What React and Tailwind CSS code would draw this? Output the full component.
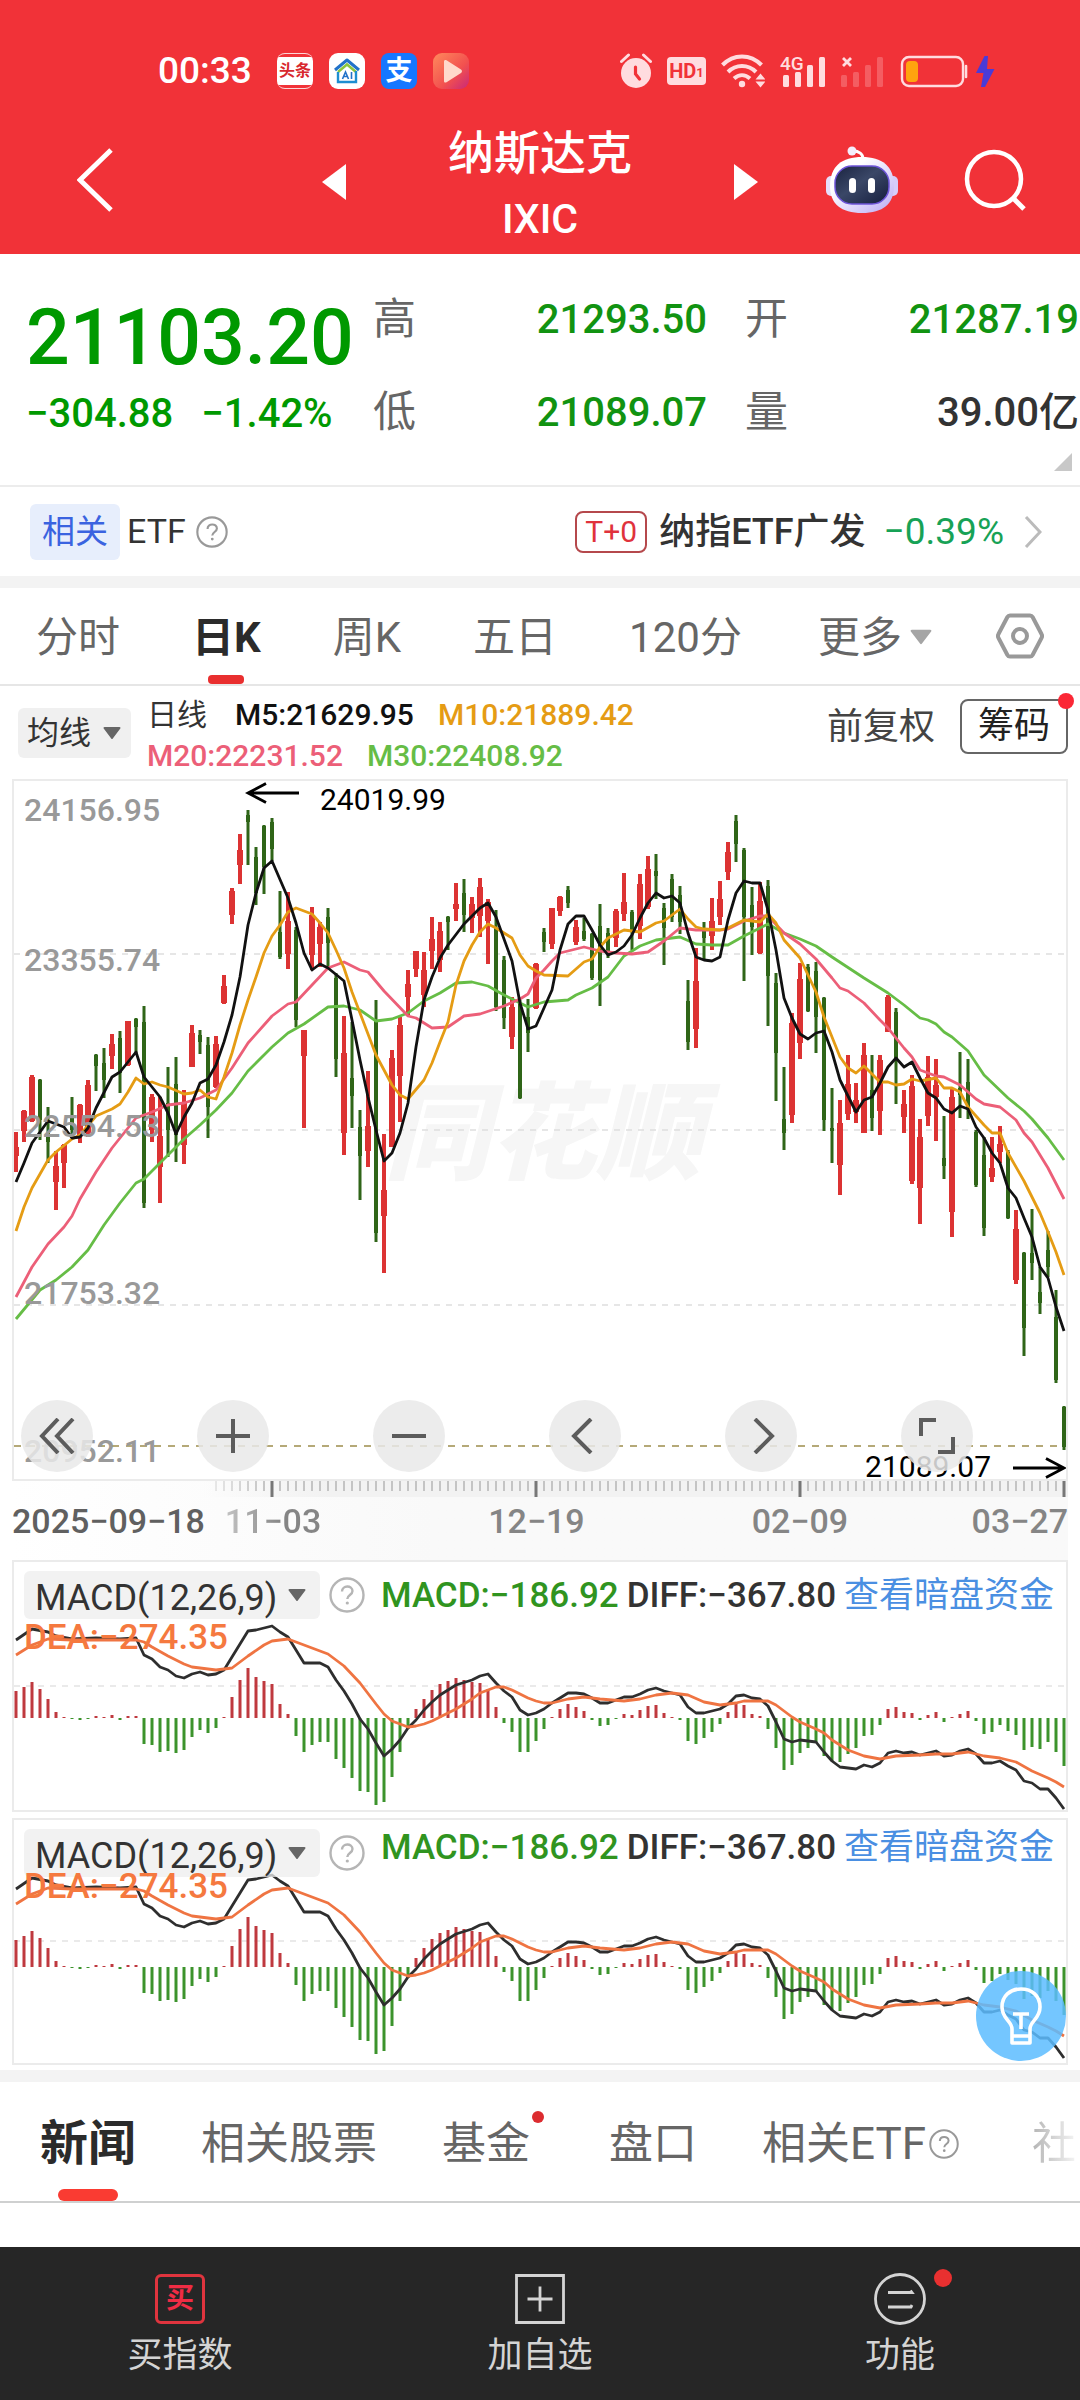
import React, { useState } from "react";

const FONT = "font-['Roboto','Noto_Sans_CJK_SC',sans-serif]";

// [color, high, body top, body bottom, low]
const candles = [
	["r", 352, 367, 376, 392], ["r", 330, 331, 351, 362], ["r", 295, 297, 341, 342], ["g", 299, 300, 340, 360],
	["g", 327, 353, 362, 383], ["r", 371, 386, 402, 430], ["r", 364, 365, 383, 408], ["g", 317, 337, 350, 358],
	["r", 324, 325, 355, 363], ["r", 300, 305, 353, 357], ["g", 274, 275, 286, 311], ["g", 268, 283, 300, 318],
	["r", 254, 264, 276, 289], ["g", 251, 258, 293, 313], ["r", 241, 241, 285, 286], ["g", 238, 239, 247, 273],
	["g", 226, 242, 423, 428], ["r", 314, 317, 350, 362], ["r", 317, 356, 387, 423], ["g", 287, 323, 350, 377],
	["g", 277, 304, 355, 382], ["r", 310, 323, 365, 384], ["r", 245, 253, 287, 287], ["g", 250, 255, 262, 274],
	["g", 257, 265, 327, 358], ["r", 256, 264, 307, 308], ["r", 195, 206, 223, 224], ["r", 108, 111, 135, 144],
	["r", 54, 70, 85, 104], ["g", 30, 35, 42, 85], ["g", 67, 77, 113, 125], ["g", 45, 46, 87, 114],
	["g", 38, 42, 69, 81], ["g", 111, 152, 177, 179], ["r", 112, 141, 174, 189], ["g", 147, 150, 240, 247],
	["r", 250, 250, 276, 348], ["r", 127, 135, 175, 190], ["r", 142, 147, 164, 187], ["g", 128, 137, 163, 187],
	["g", 193, 198, 279, 297], ["r", 236, 273, 353, 375], ["g", 242, 298, 316, 348], ["g", 330, 347, 376, 420],
	["r", 291, 346, 371, 387], ["g", 220, 240, 453, 462], ["r", 354, 410, 436, 493], ["r", 270, 278, 367, 367],
	["r", 237, 245, 296, 342], ["r", 190, 204, 217, 235], ["r", 171, 171, 189, 197], ["r", 172, 190, 215, 227],
	["r", 137, 159, 171, 189], ["r", 142, 151, 180, 192], ["g", 136, 137, 142, 170], ["r", 103, 124, 129, 141],
	["g", 99, 113, 135, 152], ["r", 117, 124, 138, 153], ["r", 98, 107, 136, 157], ["r", 119, 122, 141, 184],
	["g", 130, 148, 227, 231], ["g", 176, 180, 238, 249], ["r", 217, 227, 257, 269], ["g", 220, 223, 318, 319],
	["g", 219, 237, 253, 272], ["r", 183, 184, 228, 229], ["g", 148, 152, 162, 172], ["r", 128, 128, 164, 169],
	["r", 116, 117, 131, 136], ["g", 106, 110, 123, 128], ["r", 140, 147, 162, 165], ["g", 138, 151, 159, 161],
	["g", 153, 154, 198, 200], ["g", 124, 146, 200, 226], ["g", 148, 153, 173, 178], ["r", 129, 131, 158, 167],
	["r", 93, 122, 134, 141], ["g", 130, 132, 152, 170], ["r", 94, 104, 146, 159], ["r", 76, 89, 127, 129],
	["g", 74, 91, 96, 119], ["g", 123, 128, 148, 185], ["g", 94, 99, 137, 142], ["g", 106, 115, 142, 154],
	["g", 200, 221, 262, 270], ["r", 168, 201, 249, 268], ["g", 142, 151, 158, 180], ["r", 118, 141, 156, 170],
	["r", 101, 119, 137, 145], ["r", 62, 72, 92, 100], ["g", 35, 41, 64, 82], ["g", 68, 70, 137, 201],
	["g", 107, 125, 147, 175], ["r", 102, 121, 173, 174], ["g", 100, 106, 196, 246], ["g", 193, 203, 273, 321],
	["g", 287, 339, 353, 370], ["r", 233, 243, 335, 343], ["r", 183, 199, 263, 279], ["g", 184, 187, 231, 232],
	["g", 182, 191, 237, 273], ["g", 217, 218, 340, 351], ["g", 308, 348, 351, 383], ["r", 320, 343, 385, 415],
	["r", 275, 304, 334, 340], ["r", 303, 320, 332, 343], ["r", 263, 275, 353, 353], ["g", 275, 310, 338, 351],
	["r", 275, 280, 331, 355], ["r", 215, 217, 252, 252], ["g", 228, 232, 280, 324], ["r", 310, 324, 337, 353],
	["r", 295, 306, 401, 404], ["r", 339, 357, 408, 444], ["r", 276, 297, 336, 346], ["r", 279, 305, 317, 361],
	["g", 336, 378, 386, 399], ["r", 309, 317, 432, 457], ["g", 272, 308, 315, 338], ["g", 279, 302, 327, 339],
	["g", 350, 352, 405, 407], ["g", 357, 375, 448, 456], ["r", 357, 388, 397, 402], ["r", 346, 364, 372, 383],
	["g", 370, 372, 438, 439], ["r", 430, 449, 500, 504], ["g", 472, 473, 548, 576], ["g", 429, 473, 483, 500],
	["g", 487, 512, 523, 534], ["g", 451, 470, 487, 497], ["g", 510, 537, 600, 603], ["g", 626, 627, 667, 670],
];

// "index,y" pairs
const averages = [
	{
		name: "M30",
		color: "#66bd46",
		points:
			"0,539 3,510 5,500 7,487 9,470 11,445 13,423 15,403 16,399 18,383 19,375 21,359 23,345 25,330 27,313 29,291 32,267 34,253 36,244 39,227 41,226 43,230 45,241 47,239 49,233 51,221 53,213 55,203 57,202 59,206 61,215 63,223 64,227 66,222 69,220 70,215 72,208 74,197 76,176 78,166 80,160 83,157 85,164 87,165 89,165 91,156 92,152 94,144 96,153 98,159 100,166 102,177 106,198 109,213 111,225 113,238 114,240 115,244 116,252 117,257 119,271 121,295 124,318 126,331 127,339 129,358 131,380",
	},
	{
		name: "M20",
		color: "#ec5f78",
		points:
			"0,517 2,487 4,464 6,447 7,436 8,419 10,392 12,368 14,348 15,338 17,332 19,325 21,323 23,318 25,310 27,288 29,263 31,245 32,236 34,224 35,222 37,205 39,188 41,182 43,190 44,192 46,211 49,236 50,238 52,248 54,247 56,236 58,234 61,226 63,219 64,214 65,198 66,190 67,181 68,173 71,167 73,171 75,173 77,174 79,172 81,161 83,148 85,150 88,150 89,149 91,141 93,136 94,136 96,153 98,164 100,179 102,198 103,208 104,211 106,223 108,240 109,248 111,268 112,277 113,290 115,296 116,297 118,305 120,319 121,324 123,327 125,340 126,353 127,362 129,388 131,419",
	},
	{
		name: "M10",
		color: "#e59c14",
		points:
			"0,451 1,427 2,408 4,380 5,372 7,359 8,355 10,336 12,329 13,324 14,312 15,298 16,304 17,302 18,305 19,307 21,314 22,313 23,310 24,317 25,319 26,297 27,273 28,245 29,220 30,197 31,173 32,156 33,145 34,132 35,128 37,134 38,143 39,153 40,170 41,188 42,212 43,233 45,275 47,305 48,315 49,319 51,300 52,283 53,262 54,242 55,205 56,181 57,165 58,152 59,144 60,148 62,158 63,175 64,186 65,191 66,195 69,196 71,182 72,179 73,167 74,158 76,150 78,152 80,143 81,141 82,135 83,129 84,139 85,147 86,149 88,150 89,148 91,140 93,142 94,134 95,143 96,160 98,178 99,195 100,212 101,237 102,257 103,277 104,288 105,293 106,286 107,294 108,302 109,302 110,305 111,304 112,299 113,301 115,298 116,308 117,308 118,312 119,327 121,345 122,353 123,353 124,373 126,401 128,433 129,452 130,472 131,495",
	},
	{
		name: "M5",
		color: "#111111",
		points:
			"0,402 1,383 2,363 3,352 4,341 6,347 7,358 8,357 9,348 10,328 12,297 13,292 15,272 16,297 18,317 19,333 20,354 21,337 22,323 23,303 24,299 25,285 26,262 27,235 28,197 29,145 30,113 31,88 32,81 34,118 35,143 36,173 37,190 38,184 39,188 41,201 42,240 43,280 44,317 45,350 46,381 47,373 48,353 49,323 50,267 51,220 52,197 53,178 54,165 56,144 58,128 59,123 60,137 62,181 63,223 64,249 65,246 67,210 68,170 69,144 70,136 71,136 72,150 73,165 74,175 75,172 76,166 77,155 78,138 79,123 80,113 81,118 82,116 83,123 84,153 85,177 86,180 87,181 88,177 89,140 90,113 91,101 92,103 93,103 94,130 95,170 96,218 97,238 98,254 99,259 100,253 101,251 102,272 103,300 105,332 106,320 107,317 108,303 109,287 110,278 111,287 112,282 113,298 114,313 115,318 116,329 117,333 118,326 119,329 120,347 121,358 122,373 123,383 124,408 125,418 126,438 127,457 128,487 129,498 130,527 131,551",
	},
];

const macdBars = [
	27, 31, 36, 29, 19, 6, 1, -1, -2, -1, 2, 1, 3, -2, 2, 2, -26, -27, -34, -33, -35, -32, -19, -12, -15, -10, 1, 21, 38, 50,
	41, 37, 34, 14, 4, -18, -34, -27, -24, -24, -41, -50, -60, -73, -74, -87, -84, -59, -34, -11, 9, 19, 28, 34, 37, 40, 38,
	36, 35, 29, 11, -5, -14, -34, -34, -23, -11, 1, 9, 14, 11, 7, -2, -8, -7, -1, 4, 3, 8, 12, 13, 5, 1, -2, -23, -26, -20,
	-14, -6, 6, 15, 13, 4, 2, -11, -30, -52, -47, -35, -30, -25, -38, -43, -44, -36, -30, -18, -17, -7, 9, 11, 6, 5, -2, 3,
	6, -4, 1, 4, 7, -3, -16, -14, -7, -13, -17, -32, -29, -31, -24, -34, -48,
];

const diffLine =
	"0,78 2,89 4,86 5,82 7,79 10,80 13,79 15,80 16,63 17,59 18,51 19,48 20,42 21,40 22,44 23,46 24,43 25,44 26,48 27,61 28,74 29,87 30,88 32,92 33,86 34,81 35,68 36,55 38,55 39,51 40,38 41,27 42,14 43,-1 44,-11 45,-25 46,-38 47,-31 48,-22 49,-10 50,-2 51,8 52,16 53,23 54,28 55,33 57,38 58,42 59,44 60,35 61,27 62,21 63,8 64,3 65,5 66,9 67,15 69,25 70,25 71,24 72,20 73,15 74,15 75,18 76,21 77,21 78,24 79,28 80,30 81,27 82,25 83,23 84,11 85,5 86,5 87,7 88,9 89,14 90,22 91,23 92,20 93,19 94,12 95,-4 96,-21 97,-24 98,-22 99,-23 100,-24 101,-34 102,-43 103,-49 105,-51 106,-47 107,-49 108,-45 109,-35 110,-33 111,-35 112,-34 113,-37 114,-35 115,-33 116,-38 117,-37 118,-33 119,-31 120,-36 121,-45 122,-45 123,-43 124,-48 125,-52 126,-63 127,-65 128,-71 129,-71 130,-80 131,-91";

const deaLine =
	"0,63 2,73 3,76 4,79 7,78 10,78 15,78 16,76 17,71 19,62 21,54 22,51 25,48 26,49 27,50 28,56 29,62 31,73 32,77 34,79 35,76 37,70 39,64 41,52 43,35 45,14 46,4 47,-3 48,-6 49,-9 50,-8 51,-6 52,-3 53,1 54,5 55,9 56,14 57,19 58,25 59,28 60,31 61,31 62,28 63,24 64,20 65,17 66,15 67,15 69,19 71,21 73,19 76,17 78,19 80,23 82,25 84,23 86,16 88,13 90,15 91,17 94,17 95,13 97,1 98,-4 100,-11 101,-15 102,-22 104,-32 106,-38 108,-41 110,-38 113,-37 115,-36 117,-36 119,-34 121,-38 123,-40 125,-44 127,-53 129,-60 130,-64 131,-69";

const xAt = (i) => 4 + 8 * i;

const toPoints = (line, mapY = (y) => y) =>
	line
		.split(" ")
		.map((pair) => {
			const [i, y] = pair.split(",").map(Number);
			return `${xAt(i)},${mapY(y)}`;
		})
		.join(" ");

const Triangle = ({ className }) => (
	<svg viewBox="0 0 18 12" className={className} fill="currentColor" aria-hidden="true">
		<path d="M1.5 0h15a1 1 0 0 1 .8 1.6l-7.5 9.8a1 1 0 0 1-1.6 0L.7 1.6A1 1 0 0 1 1.5 0z" />
	</svg>
);

const HelpIcon = ({ className }) => (
	<svg viewBox="0 0 36 36" className={className} fill="none" stroke="currentColor" aria-hidden="true">
		<circle cx="18" cy="18" r="16.5" strokeWidth="2.4" />
		<path d="M13 14.5c0-6.5 10.500-6.500 10.500-.5 0 4-5.200 4-5.200 8" strokeWidth="2.400" />
		<circle cx="18.300" cy="26" r="1.600" fill="currentColor" stroke="none" />
	</svg>
);

const StatusBar = () => (
	<div className="flex h-9 items-center pl-[158px] pr-[84px]">
		<span className="text-[37px] font-medium leading-9">00:33</span>
		<div className="ml-[25px] flex gap-4">
			<div className="flex h-9 w-9 items-center justify-center overflow-hidden rounded-lg border-y border-white/80">
				<span className="bg-white px-[2px] text-[16px] font-bold leading-7 text-[#d8282e]">头条</span>
			</div>
			<svg viewBox="0 0 36 36" className="h-9 w-9" aria-hidden="true">
				<rect width="36" height="36" rx="9" fill="#fff" />
				<path d="M6 17 18 7l12 10" fill="none" stroke="#2272c9" strokeWidth="3" strokeLinejoin="round" />
				<path d="M9 19 18 11.500l9 7.500" fill="none" stroke="#8bc53f" strokeWidth="2.500" />
				<path d="M9 19v10h18V18" fill="none" stroke="#1c8ed1" strokeWidth="2.400" />
				<path d="m13.500 26 3-7 3 7m-5-2.500h4M22.500 19v7" fill="none" stroke="#2272c9" strokeWidth="1.600" />
			</svg>
			<div className="flex h-9 w-9 items-center justify-center rounded-lg bg-[#1677ff] text-[27px] font-bold leading-9">支</div>
			<svg viewBox="0 0 36 36" className="h-9 w-9" aria-hidden="true">
				<defs>
					<linearGradient id="play" x1="0" y1="0" x2="1" y2="1">
						<stop offset="0" stopColor="#ff8a5c" />
						<stop offset="0.600" stopColor="#f2504f" />
						<stop offset="1" stopColor="#c9287a" />
					</linearGradient>
				</defs>
				<rect width="36" height="36" rx="9" fill="url(#play)" />
				<path d="M11 8.500v19.500c0 1.500 1.200 2 2.500 1.200L28 20c1.300-.9 1.300-2.700 0-3.500L13.500 7.300C12.200 6.500 11 7 11 8.500z" fill="#ffd9cb" />
			</svg>
		</div>
		<div className="ml-auto flex items-center gap-[15px] text-[#ffdcdf]">
			<svg viewBox="0 0 32 36" className="h-9 w-8" fill="currentColor" aria-hidden="true">
				<circle cx="16" cy="20" r="15" />
				<path d="m1.500 8.500 7-6.500M30.500 8.500l-7-6.500" stroke="currentColor" strokeWidth="3" strokeLinecap="round" />
				<path d="M15.500 14v7l4 5" fill="none" stroke="#f13238" strokeWidth="3.200" strokeLinecap="round" />
			</svg>
			<div className="flex h-7 w-[39px] items-center justify-center rounded bg-[#ffdcdf] text-[#f13238]">
				<span className="text-[20px] font-bold leading-7">HD</span>
				<span className="pt-1 text-[13px] font-bold leading-6">1</span>
			</div>
			<svg viewBox="0 0 44 36" className="h-9 w-11" fill="none" stroke="currentColor" strokeWidth="4" aria-hidden="true">
				<path d="M1.500 12c11-11.500 28-11.500 39 0M7 19c8-8 20-8 28 0M13 25.500c5-4.500 11-4.500 16 0" />
				<circle cx="21" cy="31" r="3.200" fill="currentColor" stroke="none" />
				<path d="m34.500 26.500 5-6 5 6zM34.500 28.500l5 6 5-6z" fill="currentColor" stroke="none" />
			</svg>
			<svg viewBox="0 0 46 36" className="h-9 w-[46px]" fill="currentColor" aria-hidden="true">
				<rect x="3" y="22" width="6" height="12" rx="1.500" />
				<rect x="15" y="19" width="6" height="15" rx="1.500" />
				<rect x="27" y="12" width="6" height="22" rx="1.500" />
				<rect x="39" y="4" width="6" height="30" rx="1.500" />
				<text x="0" y="17" fontSize="19" fontWeight="500">4G</text>
			</svg>
			<svg viewBox="0 0 44 36" className="h-9 w-11" fill="currentColor" aria-hidden="true">
				<path d="m2 5 8 8m0-8-8 8" stroke="currentColor" strokeWidth="2.800" />
				<g opacity="0.250">
					<rect x="0" y="22" width="6" height="12" rx="1.500" />
					<rect x="12" y="19" width="6" height="15" rx="1.500" />
					<rect x="24" y="12" width="6" height="22" rx="1.500" />
					<rect x="36" y="4" width="6" height="30" rx="1.500" />
				</g>
			</svg>
			<svg viewBox="0 0 96 36" className="h-9 w-24" aria-hidden="true">
				<rect x="2" y="4" width="61" height="29" rx="7" fill="none" stroke="currentColor" strokeWidth="2.400" />
				<rect x="6" y="8" width="12" height="21" rx="4" fill="#ffa40f" />
				<path d="M66 13v11" stroke="currentColor" strokeWidth="2.600" strokeLinecap="round" />
				<path d="M84.500 3 76 20h7.500L81 34h4l9.500-18H87l1-13z" fill="#4a3bd8" />
			</svg>
		</div>
	</div>
);

const Robot = () => (
	<svg viewBox="0 0 72 68" className="h-[68px] w-[72px]" aria-hidden="true">
		<defs>
			<linearGradient id="shell" x1="0" y1="0" x2="1" y2="1">
				<stop offset="0.300" stopColor="#ffffff" />
				<stop offset="1" stopColor="#b9a9f5" />
			</linearGradient>
			<linearGradient id="visor" x1="0" y1="0" x2="1" y2="1">
				<stop offset="0" stopColor="#1a2340" />
				<stop offset="0.450" stopColor="#3a4767" />
				<stop offset="1" stopColor="#151d3d" />
			</linearGradient>
		</defs>
		<path d="M37 13c0-5-4-8-10-8" fill="none" stroke="#fff" strokeWidth="3" />
		<circle cx="26" cy="5" r="4.500" fill="#f4eefc" />
		<rect x="0" y="30" width="12" height="20" rx="5" fill="#e6defb" />
		<rect x="60" y="30" width="12" height="20" rx="5" fill="#d6ccfa" />
		<path d="M36 11c20 0 32 9 32 29 0 18-11 27-32 27S4 58 4 40c0-20 12-29 32-29z" fill="url(#shell)" />
		<rect x="9" y="20" width="54" height="38" rx="17" fill="url(#visor)" stroke="#6d54d8" strokeWidth="1.500" />
		<rect x="23" y="32" width="7" height="15" rx="3.500" fill="#fff" />
		<rect x="42" y="32" width="7" height="15" rx="3.500" fill="#fff" />
	</svg>
);

const Header = () => (
	<header className="bg-[#f13238] pt-[53px] text-white">
		<StatusBar />
		<div className="grid h-[165px] grid-cols-[1fr_436px_1fr] items-center">
			<button aria-label="返回" className="w-fit pl-[77px] pt-4">
				<svg viewBox="0 0 36 64" className="h-16 w-9" fill="none" stroke="currentColor" strokeWidth="5" aria-hidden="true">
					<path d="M34 2 3 32l31 30" />
				</svg>
			</button>
			<div className="flex items-center justify-between">
				<button aria-label="上一个" className="pt-5">
					<svg viewBox="0 0 24 36" className="h-9 w-6" fill="currentColor" aria-hidden="true">
						<path d="M24 0v36L0 18z" />
					</svg>
				</button>
				<div className="pt-7 text-center">
					<h1 className="text-[46px] font-medium leading-[66px]">纳斯达克</h1>
					<p className="text-[41px] font-medium leading-[66px]">IXIC</p>
				</div>
				<button aria-label="下一个" className="pt-5">
					<svg viewBox="0 0 24 36" className="h-9 w-6" fill="currentColor" aria-hidden="true">
						<path d="M0 0v36l24-18z" />
					</svg>
				</button>
			</div>
			<div className="flex items-center justify-end gap-[66px] pr-[54px] pt-4">
				<button aria-label="助手">
					<Robot />
				</button>
				<button aria-label="搜索">
					<svg viewBox="0 0 62 62" className="h-[62px] w-[62px]" fill="none" stroke="currentColor" strokeWidth="4.500" aria-hidden="true">
						<circle cx="30" cy="30" r="27" />
						<path d="m49 49 11 11" strokeWidth="5" />
					</svg>
				</button>
			</div>
		</div>
	</header>
);

const Stat = ({ label, value, className }) => (
	<div className="flex items-center justify-between leading-[93px]">
		<dt className="text-[43px] text-[#666]">{label}</dt>
		<dd className={`text-[40px] font-medium ${className}`}>{value}</dd>
	</div>
);

const Quote = () => (
	<section className="relative flex border-b-2 border-[#ececec] pb-[26px] pl-[26px] pr-px pt-[19px]">
		<div className="w-[347px] pt-[14px] font-medium text-[#009900]">
			<p className="text-[77px] leading-[102px]">21103.20</p>
			<p className="flex gap-[28px] text-[40px] leading-[50px]">
				<span>−304.88</span>
				<span>−1.42%</span>
			</p>
		</div>
		<dl className="grid flex-1 grid-cols-2 gap-x-[38px]">
			<Stat label="高" value="21293.50" className="text-[#119311]" />
			<Stat label="开" value="21287.19" className="text-[#119311]" />
			<Stat label="低" value="21089.07" className="text-[#119311]" />
			<Stat label="量" value="39.00亿" className="text-[#333]" />
		</dl>
		<span className="absolute bottom-[14px] right-2 h-[18px] w-[18px] bg-[#c8c8c8] [clip-path:polygon(100%_0,100%_100%,0_100%)]" />
	</section>
);

const RelatedEtf = () => (
	<section className="flex h-[101px] items-center border-b-[12px] border-[#f3f3f3] pl-[30px] pr-[38px] text-[#333]">
		<span className="rounded-md bg-[#e7eefc] px-[12px] text-[33px] leading-[56px] text-[#3a63e0]">相关</span>
		<span className="ml-[7px] text-[34px]">ETF</span>
		<HelpIcon className="ml-[10px] h-8 w-8 text-[#999]" />
		<a href="#etf" className="ml-auto flex items-center">
			<span className="rounded-lg border-2 border-[#b5484c] px-2 text-[30px] leading-[38px] text-[#e0323c]">T+0</span>
			<span className="ml-3 text-[36px] font-medium">纳指ETF广发</span>
			<span className="ml-[18px] text-[37px] text-[#17a256]">−0.39%</span>
			<svg viewBox="0 0 18 32" className="ml-5 h-8 w-[18px]" fill="none" stroke="#bbb" strokeWidth="3" aria-hidden="true">
				<path d="m2 1 14 15L2 31" />
			</svg>
		</a>
	</section>
);

const PeriodTabs = () => {
	const [active, setActive] = useState("日K");
	return (
		<nav className="flex h-[98px] items-stretch border-b-2 border-[#e6e6e6] px-[36px] text-[42px]">
			<div className="flex items-stretch gap-[72px]">
				{["分时", "日K", "周K", "五日", "120分"].map((t) => (
					<button
						key={t}
						onClick={() => setActive(t)}
						className={`relative whitespace-nowrap pt-[2px] ${t === active ? "font-bold text-[#2b2b2b]" : "text-[#666]"}`}
					>
						{t}
						{t === active && <span className="absolute bottom-0 left-1/2 h-[9px] w-9 -translate-x-1/2 rounded bg-[#e92f2f]" />}
					</button>
				))}
				<button className="flex items-center gap-2 whitespace-nowrap pl-1 pt-[2px] text-[#666]">
					更多
					<Triangle className="h-[18px] w-[22px] text-[#a5a5a5]" />
				</button>
			</div>
			<button aria-label="设置" className="ml-auto text-[#999]">
				<svg viewBox="0 0 48 46" className="h-[46px] w-12" fill="none" stroke="currentColor" strokeWidth="4" aria-hidden="true">
					<path d="M14 2.500h20a3 3 0 0 1 2.600 1.500L45.500 21a4 4 0 0 1 0 4l-8.900 17a3 3 0 0 1-2.600 1.500H14a3 3 0 0 1-2.600-1.500L2.500 25a4 4 0 0 1 0-4L11.400 4A3 3 0 0 1 14 2.500z" />
					<circle cx="24" cy="23" r="7" />
				</svg>
			</button>
		</nav>
	);
};

const IndicatorRow = () => (
	<div className="flex h-[93px] items-center px-3">
		<label className="relative ml-[6px] block h-[50px] w-[113px] shrink-0 rounded-md bg-[#f0f0f0]">
			<select aria-label="指标" className="h-full w-full appearance-none pl-[9px] text-[32px] text-[#333]">
				<option>均线</option>
			</select>
			<Triangle className="pointer-events-none absolute right-[10px] top-[19px] h-3 w-[18px] text-[#666]" />
		</label>
		<div className="ml-4 pt-1 text-[30px] leading-[41px]">
			<p className="flex gap-6 whitespace-nowrap">
				<span className="pr-1 text-[#333]">日线</span>
				<span className="font-medium text-[#111]">M5:21629.95</span>
				<span className="font-medium text-[#e59c14]">M10:21889.42</span>
			</p>
			<p className="flex gap-6 whitespace-nowrap font-medium">
				<span className="text-[#ec5f78]">M20:22231.52</span>
				<span className="text-[#66bd46]">M30:22408.92</span>
			</p>
		</div>
		<div className="mb-3 ml-auto flex items-center gap-[25px] text-[36px]">
			<button className="whitespace-nowrap leading-[54px] text-[#444]">前复权</button>
			<button className="relative whitespace-nowrap rounded-lg border-2 border-[#666] px-4 leading-[51px] text-[#222]">
				筹码
				<span className="absolute -right-2 -top-2 h-4 w-4 rounded-full bg-[#fb2735]" />
			</button>
		</div>
	</div>
);

const ChartButton = ({ label, children }) => (
	<button aria-label={label} className="flex h-[72px] w-[72px] items-center justify-center rounded-full bg-[#e9e9e9]/85">
		<svg viewBox="0 0 36 36" className="h-9 w-9" fill="none" stroke="#5c5c5c" strokeWidth="4" aria-hidden="true">
			{children}
		</svg>
	</button>
);

const KChart = () => (
	<div className="relative mx-3 h-[702px] border-2 border-[#ebebeb] text-[32px] font-medium leading-10 text-[#999]">
		<span className="absolute left-1/2 top-1/2 -translate-x-[156px] -translate-y-[70px] whitespace-nowrap text-[106px] font-black italic leading-[150px] text-[#f6f6f6]">
			同花顺
		</span>
		<svg viewBox="2 1 1052 698" preserveAspectRatio="none" className="absolute inset-0 h-full w-full" aria-hidden="true">
			{[174, 350, 525].map((y) => (
				<path key={y} d={`M2 ${y}H1054`} stroke="#dedede" strokeWidth="1.500" strokeDasharray="6 6" />
			))}
			<path d="M2 666H1054" stroke="#b5a978" strokeWidth="2" strokeDasharray="7 7" />
			{candles.map(([c, hi, top, bottom, lo], i) => (
				<g key={i} fill={c === "r" ? "#dc3333" : "#2f6518"}>
					<rect x={xAt(i) - (c === "r" ? 2 : 1.5)} y={hi} width={c === "r" ? 4 : 3} height={lo - hi} />
					<rect x={xAt(i) - (c === "r" ? 3 : 2)} y={top} width={c === "r" ? 6 : 4} height={Math.max(bottom - top, 2)} />
				</g>
			))}
			{averages.map((a) => (
				<polyline key={a.name} points={toPoints(a.points)} fill="none" stroke={a.color} strokeWidth="2.800" strokeLinejoin="round" />
			))}
			<path d="M287 13H236M254 3.500 236 13l18 9.500" fill="none" stroke="#000" strokeWidth="2.800" />
			<path d="M1001 688h51M1034 678.500l18 9.500-18 9.500" fill="none" stroke="#000" strokeWidth="2.800" />
		</svg>
		<span className="absolute left-[10px] top-[9px]">24156.95</span>
		<span className="absolute left-[10px] top-[159px]">23355.74</span>
		<span className="absolute left-[10px] top-[325px]">22554.53</span>
		<span className="absolute left-[10px] top-[492px]">21753.32</span>
		<span className="absolute left-[10px] top-[650px]">20952.11</span>
		<span className="absolute left-[306px] top-[-1px] text-[30px] font-normal text-black">24019.99</span>
		<span className="absolute right-[75px] top-[666px] text-[30px] font-normal text-black">21089.07</span>
		<div className="absolute left-[7px] top-[619px] flex gap-[104px]">
			<ChartButton label="收起">
				<path d="M19 1 3 18l16 17M34 1 18 18l16 17" />
			</ChartButton>
			<ChartButton label="放大">
				<path d="M18 1v34M1 18h34" />
			</ChartButton>
			<ChartButton label="缩小">
				<path d="M1 18h34" />
			</ChartButton>
			<ChartButton label="左移">
				<path d="M24 1 7 18l17 17" />
			</ChartButton>
			<ChartButton label="右移">
				<path d="m12 1 17 17-17 17" />
			</ChartButton>
			<ChartButton label="全屏">
				<path d="M2 18V2h15M34 19v15H19" />
			</ChartButton>
		</div>
	</div>
);

const DateAxis = () => (
	<div className="mx-3 h-[79px] bg-linear-to-r from-white via-[#f9f9f9] via-40% to-[#f9f9f9]">
		<svg viewBox="0 0 1056 16" preserveAspectRatio="none" className="block h-4 w-full" aria-hidden="true">
			<defs>
				<linearGradient id="ruler" x1="0.180" x2="0.300">
					<stop offset="0" stopColor="#f2f2f2" stopOpacity="0" />
					<stop offset="1" stopColor="#f2f2f2" />
				</linearGradient>
			</defs>
			<rect width="1056" height="16" fill="url(#ruler)" />
			{candles.map((_, i) => {
				if (i < 25) return null;
				const major = [32, 65, 98, 131].includes(i);
				return (
					<path
						key={i}
						d={`M${xAt(i)} 0V${major ? 16 : 10}`}
						stroke={major ? "#777" : "#a5a5a5"}
						strokeWidth={major ? 3 : 1.2}
						opacity={i < 31 ? 0.4 + (i - 25) * 0.1 : 1}
					/>
				);
			})}
		</svg>
		<div className="flex pt-[2px] text-[34px] font-medium leading-[44px] text-[#858585]">
			<span className="text-[#606060]">2025−09−18</span>
			<span className="ml-5 bg-linear-to-r from-[#c4c4c4] to-[#858585] to-60% bg-clip-text text-transparent">11−03</span>
			<span className="ml-[167px]">12−19</span>
			<span className="ml-[167px]">02−09</span>
			<span className="ml-auto">03−27</span>
		</div>
	</div>
);

const MacdPanel = ({ id, height, zero, grid, statsClass, deaClass }) => (
	<section className={`relative mx-3 border-2 border-[#ebebeb] text-[35px] ${height === 252 ? "h-[252px]" : "h-[247px]"}`}>
		<svg viewBox={`2 2 1052 ${height - 4}`} preserveAspectRatio="none" className="absolute inset-0 h-full w-full" aria-hidden="true">
			<path d={`M2 ${grid}H1054`} stroke="#e3e3e3" strokeWidth="1.500" strokeDasharray="6 6" />
			{macdBars.map((v, i) => (
				<rect
					key={i}
					x={xAt(i) - 1.5}
					y={v > 0 ? zero - v : zero}
					width="3"
					height={Math.abs(v)}
					fill={v > 0 ? "#bf393f" : "#3c932c"}
				/>
			))}
			<polyline points={toPoints(diffLine, (v) => zero - v)} fill="none" stroke="#2e2e2e" strokeWidth="2.800" strokeLinejoin="round" />
			<polyline points={toPoints(deaLine, (v) => zero - v)} fill="none" stroke="#ef7442" strokeWidth="2.800" strokeLinejoin="round" />
		</svg>
		<div className="relative flex items-start pl-[10px] pt-[9px]">
			<label className="relative block h-12 w-[296px] shrink-0 rounded-md bg-[#ededed]/75">
				<select id={id} aria-label="副图指标" className="h-full w-full appearance-none pl-[11px] text-[36px] text-[#333]">
					<option>MACD(12,26,9)</option>
				</select>
				<Triangle className="pointer-events-none absolute right-[14px] top-[18px] h-3 w-[18px] text-[#666]" />
			</label>
			<button aria-label="说明" className="ml-[9px] mt-[6px]">
				<HelpIcon className="h-9 w-9 text-[#b5b5b5]" />
			</button>
			<p className={`ml-4 flex gap-2 whitespace-nowrap leading-[50px] ${statsClass}`}>
				<span className="font-medium text-[#30941f]">MACD:−186.92</span>
				<span className="font-medium text-[#333]">DIFF:−367.80</span>
				<a href="#fund" className="text-[#4a8fe2]">查看暗盘资金</a>
			</p>
		</div>
		<p className={`relative w-fit pl-[10px] font-medium leading-10 text-[#f5793f] ${deaClass}`}>DEA:−274.35</p>
	</section>
);

const newsTabs = ["新闻", "相关股票", "基金", "盘口", "相关ETF"];

const NewsTabs = () => {
	const [active, setActive] = useState("新闻");
	return (
		<nav className="flex h-[133px] items-stretch gap-[65px] overflow-hidden border-b-2 border-t-[12px] border-b-[#cfd0d0] border-t-[#f3f3f3] pl-[40px]">
			{newsTabs.map((t) => (
				<button
					key={t}
					onClick={() => setActive(t)}
					className={`relative flex shrink-0 items-center whitespace-nowrap pt-1 ${
						t === active ? "text-[48px] font-bold text-[#2b2b2b]" : "text-[44px] text-[#666]"
					}`}
				>
					{t}
					{t === active && <span className="absolute bottom-0 left-1/2 h-3 w-[60px] -translate-x-1/2 rounded-md bg-[#fa3b32]" />}
					{t === "基金" && <span className="mb-[54px] ml-[2px] h-3 w-3 rounded-full bg-[#dc2c30]" />}
					{t === "相关ETF" && <HelpIcon className="ml-[3px] h-[30px] w-[30px] text-[#999]" />}
				</button>
			))}
			<button className="shrink-0 bg-linear-to-r from-[#aaa] to-[#f4f4f4] bg-clip-text pl-2 pt-1 text-[44px] text-transparent">社</button>
		</nav>
	);
};

const BottomItem = ({ label, dot, children }) => (
	<button className="flex flex-1 flex-col items-center text-[35px] leading-[48px] text-[#d4d4d4]">
		<span className="relative mb-[7px] flex h-[52px] w-[52px] items-center justify-center">
			{children}
			{dot && <span className="absolute -right-[26px] -top-1 h-[18px] w-[18px] rounded-full bg-[#e93030]" />}
		</span>
		{label}
	</button>
);

const BottomBar = () => (
	<footer className="mt-11 flex h-[154px] bg-[#262626] pt-[26px]">
		<BottomItem label="买指数">
			<span className="flex h-[50px] w-[50px] items-center justify-center rounded-md border-[3px] border-[#e0343e] text-[28px] font-bold leading-8 text-[#f02c44]">
				买
			</span>
		</BottomItem>
		<BottomItem label="加自选">
			<svg viewBox="0 0 50 50" className="h-[50px] w-[50px]" fill="none" stroke="currentColor" strokeWidth="2.800" aria-hidden="true">
				<path d="M1.500 1.500h47v47h-47zM25 12.500v25M12.500 25h25" />
			</svg>
		</BottomItem>
		<BottomItem label="功能" dot>
			<svg viewBox="0 0 52 52" className="h-[52px] w-[52px]" fill="none" stroke="currentColor" strokeWidth="2.800" aria-hidden="true">
				<circle cx="26" cy="26" r="24.500" />
				<path d="M14 19.500h24l-1.500-2M14 34h23l1-2" />
			</svg>
		</BottomItem>
	</footer>
);

const App = () => (
	<div className={`w-full overflow-hidden bg-white ${FONT}`}>
		<Header />
		<Quote />
		<RelatedEtf />
		<PeriodTabs />
		<IndicatorRow />
		<KChart />
		<DateAxis />
		<MacdPanel id="macd-main" height={252} zero={158} grid={126} statsClass="" deaClass="-mt-[3px]" />
		<div className="relative mb-[5px] mt-[6px]">
			<MacdPanel id="macd-sub" height={247} zero={149} grid={123} statsClass="-mt-[6px]" deaClass="-mt-[10px]" />
			<button aria-label="提示" className="absolute bottom-1 right-[14px] flex h-[90px] w-[90px] items-center justify-center rounded-full bg-[#5cbcff]/85">
				<svg viewBox="0 0 42 58" className="h-[58px] w-[42px]" fill="none" stroke="#fff" strokeWidth="3.600" strokeLinejoin="round" aria-hidden="true">
					<path d="M12 42c0-8-10-10-10-22C2 9 10 2 21 2s19 7 19 18c0 12-10 14-10 22v14H12z" />
					<path d="M12 49h18M21 42V28M13 27h16" />
				</svg>
			</button>
		</div>
		<NewsTabs />
		<BottomBar />
	</div>
);

export default App;
